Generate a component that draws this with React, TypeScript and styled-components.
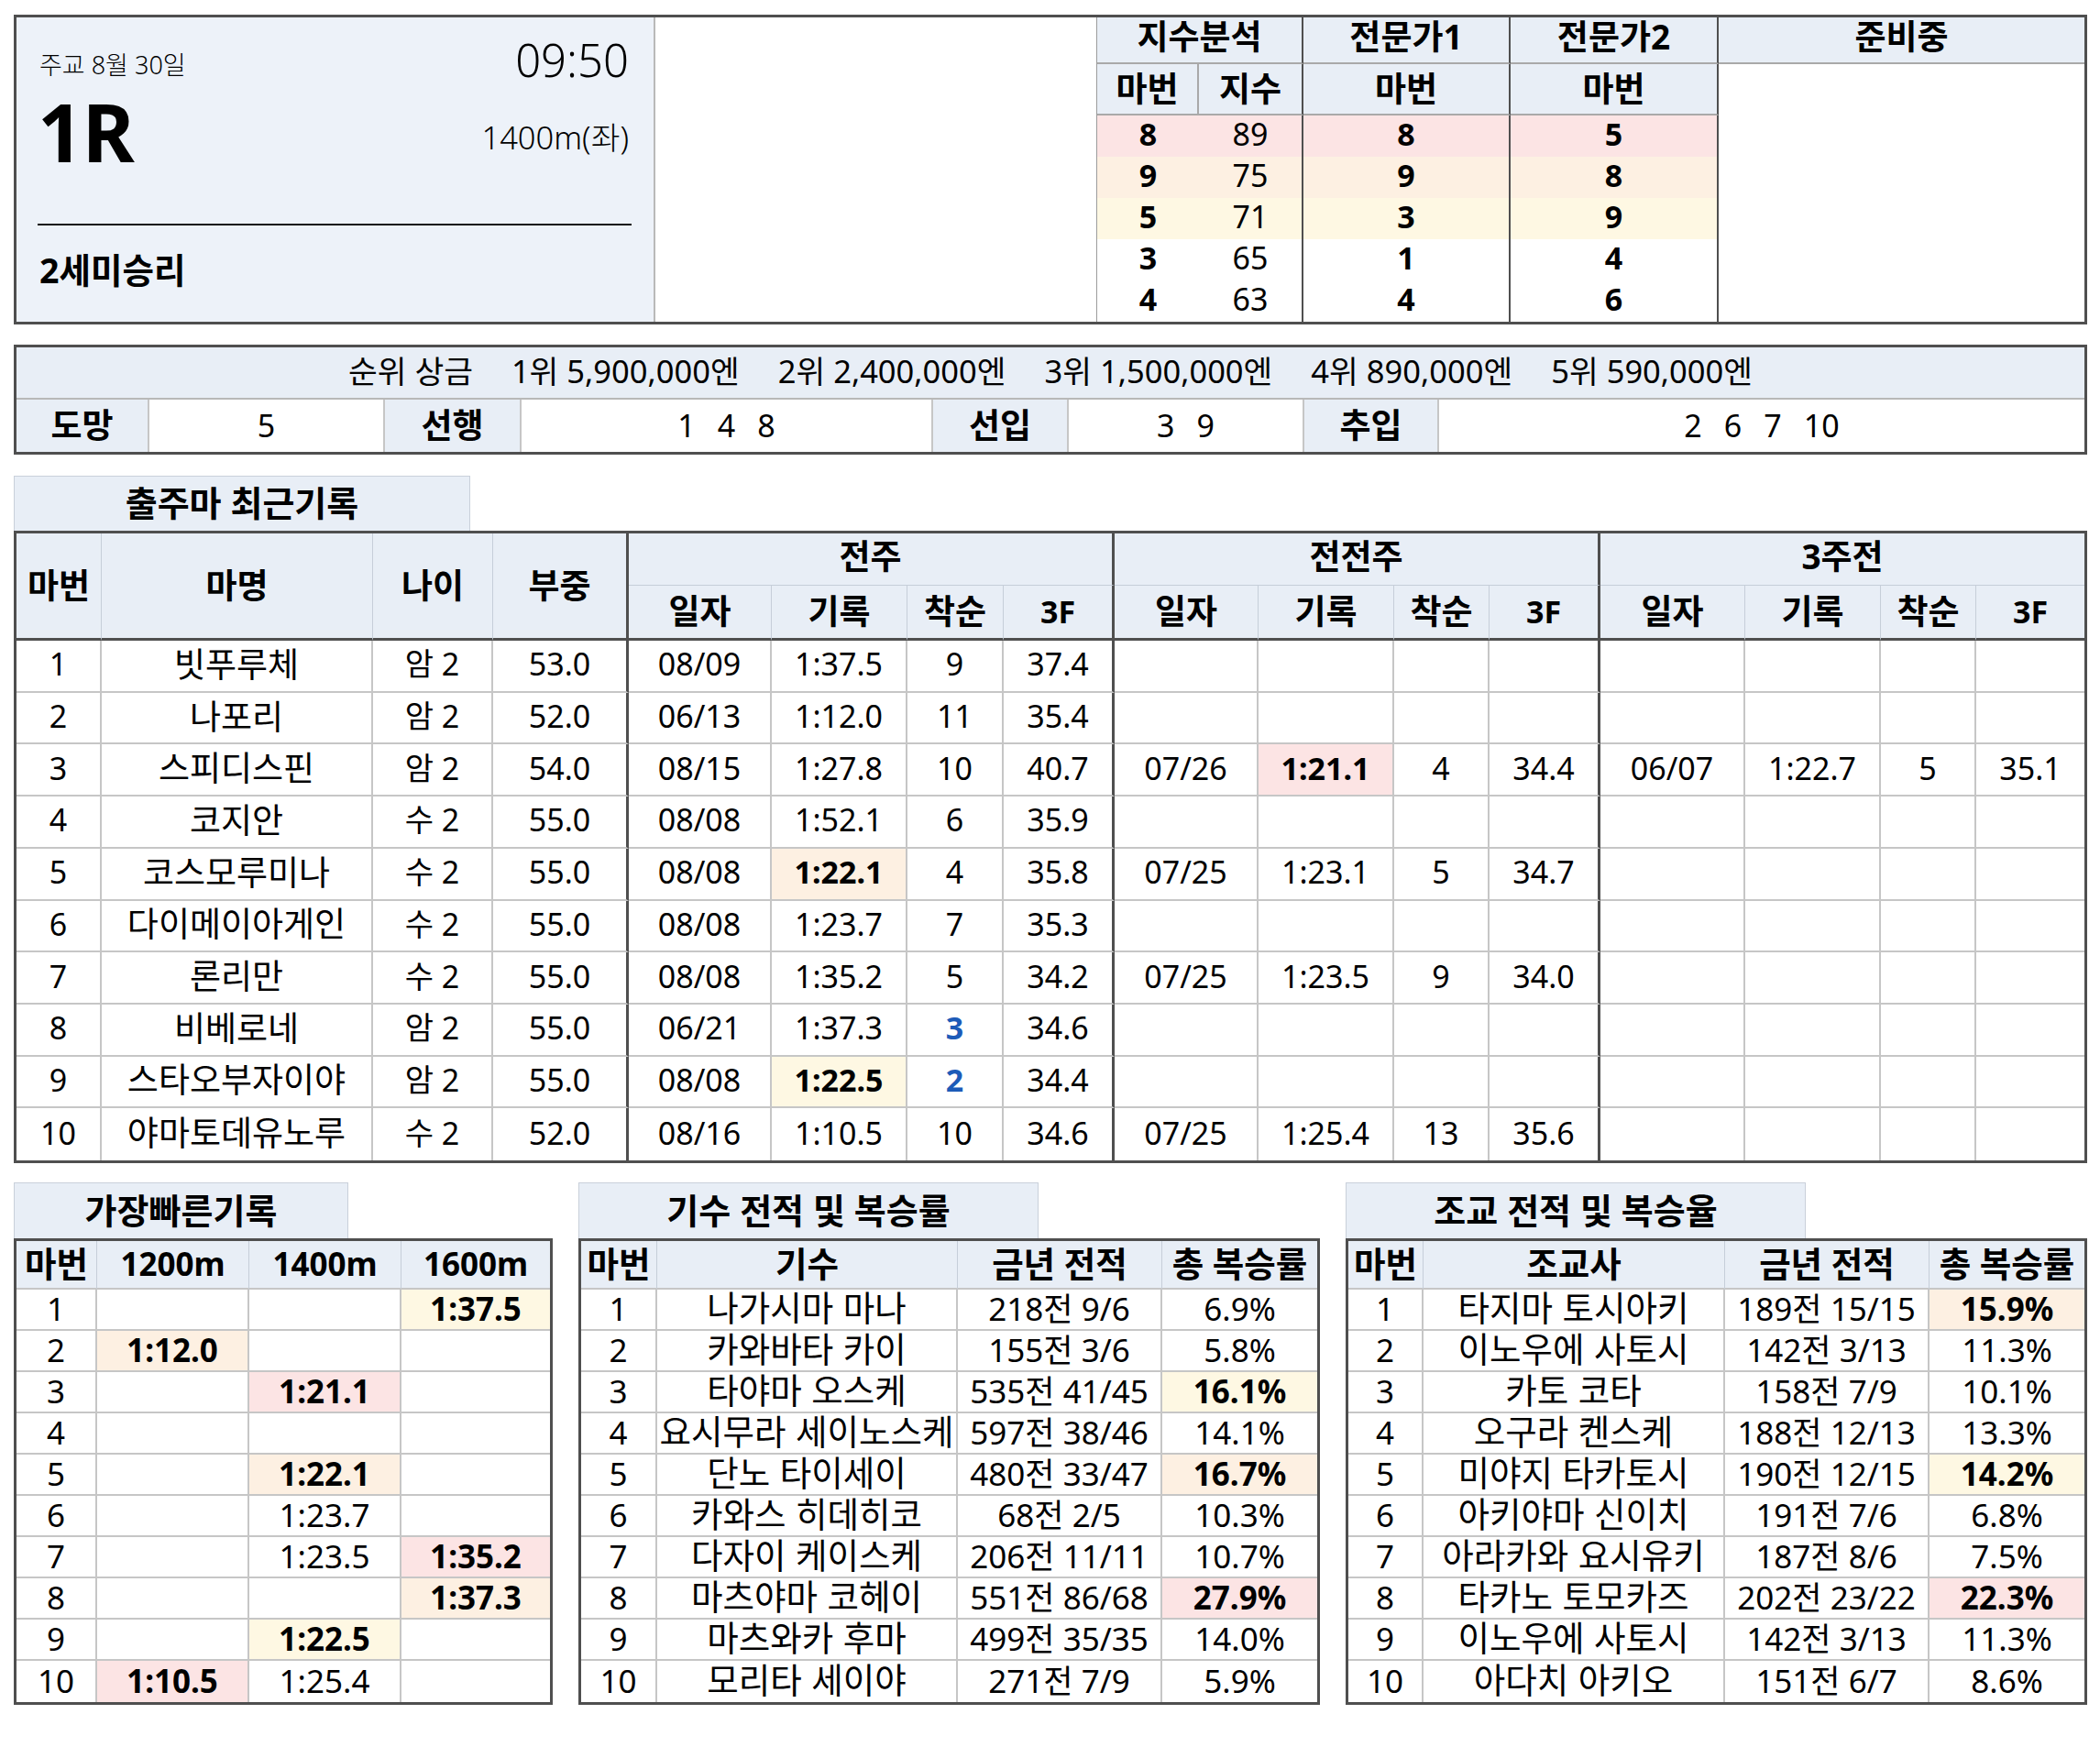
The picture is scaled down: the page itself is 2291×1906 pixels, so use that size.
import React from "react";
import styled, { createGlobalStyle } from "styled-components";

const C = {
  dark: "#4f4f4f",
  thin: "#c6c6c6",
  headLine: "#c6ced9",
  head: "#e8eef6",
  info: "#edf2f9",
  blue: "#1d5bb8",
};

type Tone = "pink" | "peach" | "yellow";
type Edge = "none" | "thin" | "head" | "gray" | "group" | "outer";

const TONE: Record<Tone, string> = {
  pink: "#fce4e4",
  peach: "#fdf0e2",
  yellow: "#fef8e3",
};

const edge = (e: Edge = "none") => {
  switch (e) {
    case "thin":
      return `2px solid ${C.thin}`;
    case "head":
      return `1px solid ${C.headLine}`;
    case "gray":
      return "2px solid #a9a9a9";
    case "group":
      return `2px solid ${C.dark}`;
    case "outer":
      return `3px solid ${C.dark}`;
    default:
      return "none";
  }
};

const GlobalStyle = createGlobalStyle`
  *, *::before, *::after { box-sizing: border-box; }
  html, body { margin: 0; padding: 0; background: #ffffff; }
  body {
    font-family: "Noto Sans", "Noto Sans CJK KR", sans-serif;
    color: #000000;
  }
`;

interface CellProps {
  $r?: Edge;
  $b?: Edge;
  $tone?: Tone;
  $col?: number;
  $row?: number;
  $bold?: boolean;
  $color?: string;
  $kr?: boolean;
  $lift?: number;
}

/* grids set --kr: the size used for cells whose text is mostly Hangul */
const Cell = styled.div<CellProps>`
  display: flex;
  align-items: center;
  justify-content: center;
  min-width: 0;
  white-space: nowrap;
  line-height: 1;
  padding-bottom: ${(p) => p.$lift ?? 2}px;
  border-right: ${(p) => edge(p.$r)};
  border-bottom: ${(p) => edge(p.$b)};
  background: ${(p) => (p.$tone ? TONE[p.$tone] : "transparent")};
  grid-column: ${(p) => (p.$col ? `span ${p.$col}` : "auto")};
  grid-row: ${(p) => (p.$row ? `span ${p.$row}` : "auto")};
  font-weight: ${(p) => (p.$bold ? 700 : 400)};
  font-size: ${(p) => (p.$kr ? "var(--kr)" : "inherit")};
  color: ${(p) => p.$color ?? "inherit"};
`;

const HeadCell = styled(Cell)`
  background: ${C.head};
  font-weight: 700;
`;

const NameCell = styled(Cell)`
  font-family: "Liberation Sans", "Noto Sans CJK KR", sans-serif;
  padding-bottom: 0;
`;

/* ---------- page ---------- */

const Page = styled.main`
  display: flex;
  flex-direction: column;
  width: 2262px;
  margin: 16px 0 0 15px;
  padding-bottom: 40px;
`;

/* ---------- top: race info + index table ---------- */

const TopBox = styled.section`
  display: flex;
  height: 338px;
  border: 3px solid ${C.dark};
`;

const InfoPanel = styled.div`
  flex: none;
  width: 697px;
  background: ${C.info};
  border-right: 2px solid #b9b9b9;
  padding: 0 24px 0 23px;
  display: flex;
  flex-direction: column;
`;

const InfoTopRow = styled.div`
  display: flex;
  justify-content: space-between;
  align-items: flex-end;
  margin-top: 22px;
  padding: 0 3px 0 2px;
`;

const DateText = styled.span`
  font-size: 27px;
  font-weight: 300;
  line-height: 1;
  margin-bottom: 6px;
`;

const TimeText = styled.span`
  font-size: 49px;
  font-weight: 300;
  line-height: 1;
`;

const RaceRow = styled.div`
  display: flex;
  justify-content: space-between;
  align-items: center;
  margin-top: 10px;
  padding: 0 3px 0 0;
`;

const RaceNo = styled.span`
  font-size: 87px;
  font-weight: 700;
  line-height: 1;
  letter-spacing: -1px;
`;

const Distance = styled.span`
  font-size: 34.5px;
  font-weight: 300;
  line-height: 1;
  margin-top: 14px;
`;

const InfoRule = styled.hr`
  margin: 57px 0 0 0;
  height: 2px;
  border: none;
  background: #111111;
`;

const Grade = styled.span`
  margin-top: 30px;
  padding-left: 2px;
  font-size: 37.5px;
  font-weight: 700;
  line-height: 1;
`;

const Blank = styled.div`
  flex: 1;
  background: #ffffff;
`;

const IndexGrid = styled.div`
  --kr: 37px;
  flex: none;
  width: 1078px;
  height: 100%;
  display: grid;
  grid-template-columns: 111px 114px 226px 227px 399px;
  grid-template-rows: 51px 56px repeat(5, 1fr);
  border-left: 1px solid #9c9c9c;
  font-size: 34px;
`;

/* ---------- prize / running-style box ---------- */

const PrizeBox = styled.section`
  --kr: 37px;
  margin-top: 22px;
  display: grid;
  grid-template-columns: 145px 257px 149px 449px 148px 257px 147px 704px;
  grid-template-rows: 57px 57px;
  border: 3px solid ${C.dark};
  font-size: 34px;
`;

const PrizeLine = styled.div`
  grid-column: 1 / -1;
  display: flex;
  align-items: center;
  justify-content: center;
  gap: 42px;
  padding-bottom: 2px;
  background: ${C.head};
  border-bottom: 2px solid #b8b8b8;
  font-size: 34.5px;
  line-height: 1;
  white-space: nowrap;
`;

const NumberSet = styled.span`
  display: inline-flex;
  gap: 24px;
`;

/* ---------- section tabs ---------- */

const SectionTab = styled.div<{ $w: number; $h: number }>`
  flex: none;
  width: ${(p) => p.$w}px;
  height: ${(p) => p.$h}px;
  display: flex;
  align-items: center;
  justify-content: center;
  padding-bottom: 3px;
  background: ${C.head};
  border: 1px solid #c9d0da;
  border-bottom: none;
  font-size: 38px;
  font-weight: 700;
  line-height: 1;
  white-space: nowrap;
`;

/* ---------- recent records ---------- */

const RecentSection = styled.section`
  margin-top: 23px;
  display: flex;
  flex-direction: column;
`;

const RecentGrid = styled.div`
  --kr: 37px;
  display: grid;
  grid-template-columns:
    93px 296px 131px 148px
    156px 148px 105px 121px
    157px 148px 104px 121px
    158px 148px 104px 118px;
  grid-template-rows: 57px 60px repeat(10, 1fr);
  height: 690px;
  border: 3px solid ${C.dark};
  font-size: 34px;
`;

/* ---------- bottom stat tables ---------- */

const BottomRow = styled.div`
  margin-top: 21px;
  display: flex;
  align-items: flex-start;
  gap: 28px;
`;

const Block = styled.section<{ $w: number }>`
  flex: none;
  width: ${(p) => p.$w}px;
  display: flex;
  flex-direction: column;
`;

const StatGrid = styled.div<{ $cols: string }>`
  --kr: 37.5px;
  display: grid;
  grid-template-columns: ${(p) => p.$cols};
  grid-template-rows: 53px repeat(10, 1fr);
  height: 509px;
  border: 3px solid ${C.dark};
  font-size: 35px;
`;

/* ---------- data ---------- */

const indexRows: { a: string; s: string; e1: string; e2: string; tone?: Tone }[] = [
  { a: "8", s: "89", e1: "8", e2: "5", tone: "pink" },
  { a: "9", s: "75", e1: "9", e2: "8", tone: "peach" },
  { a: "5", s: "71", e1: "3", e2: "9", tone: "yellow" },
  { a: "3", s: "65", e1: "1", e2: "4" },
  { a: "4", s: "63", e1: "4", e2: "6" },
];

type Race = { d: string; t: string; p: string; f: string; tone?: Tone } | null;

const horses: { no: number; name: string; age: string; wt: string; r: Race[] }[] = [
  { no: 1, name: "빗푸루체", age: "암 2", wt: "53.0", r: [{ d: "08/09", t: "1:37.5", p: "9", f: "37.4" }, null, null] },
  { no: 2, name: "나포리", age: "암 2", wt: "52.0", r: [{ d: "06/13", t: "1:12.0", p: "11", f: "35.4" }, null, null] },
  {
    no: 3, name: "스피디스핀", age: "암 2", wt: "54.0",
    r: [
      { d: "08/15", t: "1:27.8", p: "10", f: "40.7" },
      { d: "07/26", t: "1:21.1", p: "4", f: "34.4", tone: "pink" },
      { d: "06/07", t: "1:22.7", p: "5", f: "35.1" },
    ],
  },
  { no: 4, name: "코지안", age: "수 2", wt: "55.0", r: [{ d: "08/08", t: "1:52.1", p: "6", f: "35.9" }, null, null] },
  {
    no: 5, name: "코스모루미나", age: "수 2", wt: "55.0",
    r: [{ d: "08/08", t: "1:22.1", p: "4", f: "35.8", tone: "peach" }, { d: "07/25", t: "1:23.1", p: "5", f: "34.7" }, null],
  },
  { no: 6, name: "다이메이아게인", age: "수 2", wt: "55.0", r: [{ d: "08/08", t: "1:23.7", p: "7", f: "35.3" }, null, null] },
  {
    no: 7, name: "론리만", age: "수 2", wt: "55.0",
    r: [{ d: "08/08", t: "1:35.2", p: "5", f: "34.2" }, { d: "07/25", t: "1:23.5", p: "9", f: "34.0" }, null],
  },
  { no: 8, name: "비베로네", age: "암 2", wt: "55.0", r: [{ d: "06/21", t: "1:37.3", p: "3", f: "34.6" }, null, null] },
  { no: 9, name: "스타오부자이야", age: "암 2", wt: "55.0", r: [{ d: "08/08", t: "1:22.5", p: "2", f: "34.4", tone: "yellow" }, null, null] },
  {
    no: 10, name: "야마토데유노루", age: "수 2", wt: "52.0",
    r: [{ d: "08/16", t: "1:10.5", p: "10", f: "34.6" }, { d: "07/25", t: "1:25.4", p: "13", f: "35.6" }, null],
  },
];

type Rec = { t: string; tone?: Tone } | null;

const fastest: Rec[][] = [
  [null, null, { t: "1:37.5", tone: "yellow" }],
  [{ t: "1:12.0", tone: "peach" }, null, null],
  [null, { t: "1:21.1", tone: "pink" }, null],
  [null, null, null],
  [null, { t: "1:22.1", tone: "peach" }, null],
  [null, { t: "1:23.7" }, null],
  [null, { t: "1:23.5" }, { t: "1:35.2", tone: "pink" }],
  [null, null, { t: "1:37.3", tone: "peach" }],
  [null, { t: "1:22.5", tone: "yellow" }, null],
  [{ t: "1:10.5", tone: "pink" }, { t: "1:25.4" }, null],
];

type Person = { name: string; rec: string; rate: string; tone?: Tone };

const jockeys: Person[] = [
  { name: "나가시마 마나", rec: "218전 9/6", rate: "6.9%" },
  { name: "카와바타 카이", rec: "155전 3/6", rate: "5.8%" },
  { name: "타야마 오스케", rec: "535전 41/45", rate: "16.1%", tone: "yellow" },
  { name: "요시무라 세이노스케", rec: "597전 38/46", rate: "14.1%" },
  { name: "단노 타이세이", rec: "480전 33/47", rate: "16.7%", tone: "peach" },
  { name: "카와스 히데히코", rec: "68전 2/5", rate: "10.3%" },
  { name: "다자이 케이스케", rec: "206전 11/11", rate: "10.7%" },
  { name: "마츠야마 코헤이", rec: "551전 86/68", rate: "27.9%", tone: "pink" },
  { name: "마츠와카 후마", rec: "499전 35/35", rate: "14.0%" },
  { name: "모리타 세이야", rec: "271전 7/9", rate: "5.9%" },
];

const trainers: Person[] = [
  { name: "타지마 토시아키", rec: "189전 15/15", rate: "15.9%", tone: "peach" },
  { name: "이노우에 사토시", rec: "142전 3/13", rate: "11.3%" },
  { name: "카토 코타", rec: "158전 7/9", rate: "10.1%" },
  { name: "오구라 켄스케", rec: "188전 12/13", rate: "13.3%" },
  { name: "미야지 타카토시", rec: "190전 12/15", rate: "14.2%", tone: "yellow" },
  { name: "아키야마 신이치", rec: "191전 7/6", rate: "6.8%" },
  { name: "아라카와 요시유키", rec: "187전 8/6", rate: "7.5%" },
  { name: "타카노 토모카즈", rec: "202전 23/22", rate: "22.3%", tone: "pink" },
  { name: "이노우에 사토시", rec: "142전 3/13", rate: "11.3%" },
  { name: "아다치 아키오", rec: "151전 6/7", rate: "8.6%" },
];

/* ---------- components ---------- */

function TopSection() {
  return (
    <TopBox>
      <InfoPanel>
        <InfoTopRow>
          <DateText>주교 8월 30일</DateText>
          <TimeText>09:50</TimeText>
        </InfoTopRow>
        <RaceRow>
          <RaceNo>1R</RaceNo>
          <Distance>1400m(좌)</Distance>
        </RaceRow>
        <InfoRule />
        <Grade>2세미승리</Grade>
      </InfoPanel>
      <Blank />
      <IndexGrid>
        <HeadCell $kr $lift={9} $col={2} $r="group" $b="gray">지수분석</HeadCell>
        <HeadCell $kr $lift={9} $r="group" $b="gray">전문가1</HeadCell>
        <HeadCell $kr $lift={9} $r="group" $b="gray">전문가2</HeadCell>
        <HeadCell $kr $lift={9} $b="gray">준비중</HeadCell>
        <HeadCell $kr $r="gray" $b="gray">마번</HeadCell>
        <HeadCell $kr $r="group" $b="gray">지수</HeadCell>
        <HeadCell $kr $r="group" $b="gray">마번</HeadCell>
        <HeadCell $kr $r="group" $b="gray">마번</HeadCell>
        <Cell $row={6} />
        {indexRows.map((r, i) => (
          <React.Fragment key={i}>
            <Cell $lift={5} $tone={r.tone} $bold>{r.a}</Cell>
            <Cell $lift={5} $tone={r.tone} $r="group">{r.s}</Cell>
            <Cell $lift={5} $tone={r.tone} $r="group" $bold>{r.e1}</Cell>
            <Cell $lift={5} $tone={r.tone} $r="group" $bold>{r.e2}</Cell>
          </React.Fragment>
        ))}
      </IndexGrid>
    </TopBox>
  );
}

function PrizeSection() {
  const prizes = ["1위 5,900,000엔", "2위 2,400,000엔", "3위 1,500,000엔", "4위 890,000엔", "5위 590,000엔"];
  const styles: { label: string; nums: string[] }[] = [
    { label: "도망", nums: ["5"] },
    { label: "선행", nums: ["1", "4", "8"] },
    { label: "선입", nums: ["3", "9"] },
    { label: "추입", nums: ["2", "6", "7", "10"] },
  ];
  return (
    <PrizeBox>
      <PrizeLine>
        <span>순위 상금</span>
        {prizes.map((p) => (
          <span key={p}>{p}</span>
        ))}
      </PrizeLine>
      {styles.map((s, i) => (
        <React.Fragment key={s.label}>
          <HeadCell $kr $r="thin">{s.label}</HeadCell>
          <Cell $r={i === styles.length - 1 ? "none" : "thin"}>
            <NumberSet>
              {s.nums.map((n) => (
                <span key={n}>{n}</span>
              ))}
            </NumberSet>
          </Cell>
        </React.Fragment>
      ))}
    </PrizeBox>
  );
}

function RecentSectionView() {
  const groups = ["전주", "전전주", "3주전"];
  const sub = ["일자", "기록", "착순", "3F"];
  return (
    <RecentSection>
      <SectionTab $w={498} $h={60}>출주마 최근기록</SectionTab>
      <RecentGrid>
        <HeadCell $kr $row={2} $r="head" $b="outer">마번</HeadCell>
        <HeadCell $kr $row={2} $r="head" $b="outer">마명</HeadCell>
        <HeadCell $kr $row={2} $r="head" $b="outer">나이</HeadCell>
        <HeadCell $kr $row={2} $r="outer" $b="outer">부중</HeadCell>
        {groups.map((g, gi) => (
          <HeadCell key={g} $kr $lift={8} $col={4} $r={gi < 2 ? "outer" : "none"} $b="head">
            {g}
          </HeadCell>
        ))}
        {groups.map((g, gi) =>
          sub.map((s, si) => (
            <HeadCell key={g + s} $kr={si < 3} $r={si < 3 ? "head" : gi < 2 ? "outer" : "none"} $b="outer">
              {s}
            </HeadCell>
          ))
        )}
        {horses.map((h, hi) => {
          const b: Edge = hi < horses.length - 1 ? "thin" : "none";
          return (
            <React.Fragment key={h.no}>
              <Cell $lift={4} $r="thin" $b={b}>{h.no}</Cell>
              <Cell $lift={4} $kr $r="thin" $b={b}>{h.name}</Cell>
              <Cell $lift={4} $r="thin" $b={b}>{h.age}</Cell>
              <Cell $lift={4} $r="outer" $b={b}>{h.wt}</Cell>
              {h.r.map((r, ri) => {
                const last: Edge = ri < 2 ? "outer" : "none";
                const placed = r ? Number(r.p) <= 3 : false;
                return (
                  <React.Fragment key={ri}>
                    <Cell $lift={4} $r="thin" $b={b}>{r?.d}</Cell>
                    <Cell $lift={4} $r="thin" $b={b} $tone={r?.tone} $bold={!!r?.tone}>{r?.t}</Cell>
                    <Cell $lift={4} $r="thin" $b={b} $bold={placed} $color={placed ? C.blue : undefined}>{r?.p}</Cell>
                    <Cell $lift={4} $r={last} $b={b}>{r?.f}</Cell>
                  </React.Fragment>
                );
              })}
            </React.Fragment>
          );
        })}
      </RecentGrid>
    </RecentSection>
  );
}

function FastestTable() {
  return (
    <Block $w={588}>
      <SectionTab $w={365} $h={61}>가장빠른기록</SectionTab>
      <StatGrid $cols="88px 166px 166px 162px">
        {["마번", "1200m", "1400m", "1600m"].map((h, i) => (
          <HeadCell key={h} $kr={i === 0} $r={i < 3 ? "head" : "none"} $b="thin">{h}</HeadCell>
        ))}
        {fastest.map((row, ri) => {
          const b: Edge = ri < fastest.length - 1 ? "thin" : "none";
          return (
            <React.Fragment key={ri}>
              <Cell $r="thin" $b={b}>{ri + 1}</Cell>
              {row.map((c, ci) => (
                <Cell key={ci} $r={ci < 2 ? "thin" : "none"} $b={b} $tone={c?.tone} $bold={!!c?.tone}>
                  {c?.t}
                </Cell>
              ))}
            </React.Fragment>
          );
        })}
      </StatGrid>
    </Block>
  );
}

function PersonTable({ title, role, cols, data }: { title: string; role: string; cols: string; data: Person[] }) {
  return (
    <Block $w={809}>
      <SectionTab $w={502} $h={61}>{title}</SectionTab>
      <StatGrid $cols={cols}>
        {["마번", role, "금년 전적", "총 복승률"].map((h, i) => (
          <HeadCell key={h} $kr $r={i < 3 ? "head" : "none"} $b="thin">{h}</HeadCell>
        ))}
        {data.map((p, ri) => {
          const b: Edge = ri < data.length - 1 ? "thin" : "none";
          return (
            <React.Fragment key={ri}>
              <Cell $r="thin" $b={b}>{ri + 1}</Cell>
              <NameCell $kr $r="thin" $b={b}>{p.name}</NameCell>
              <Cell $r="thin" $b={b}>{p.rec}</Cell>
              <Cell $b={b} $tone={p.tone} $bold={!!p.tone}>{p.rate}</Cell>
            </React.Fragment>
          );
        })}
      </StatGrid>
    </Block>
  );
}

export default function App() {
  return (
    <>
      <GlobalStyle />
      <Page>
        <TopSection />
        <PrizeSection />
        <RecentSectionView />
        <BottomRow>
          <FastestTable />
          <PersonTable title="기수 전적 및 복승률" role="기수" cols="83px 328px 223px 169px" data={jockeys} />
          <PersonTable title="조교 전적 및 복승율" role="조교사" cols="82px 329px 223px 169px" data={trainers} />
        </BottomRow>
      </Page>
    </>
  );
}
